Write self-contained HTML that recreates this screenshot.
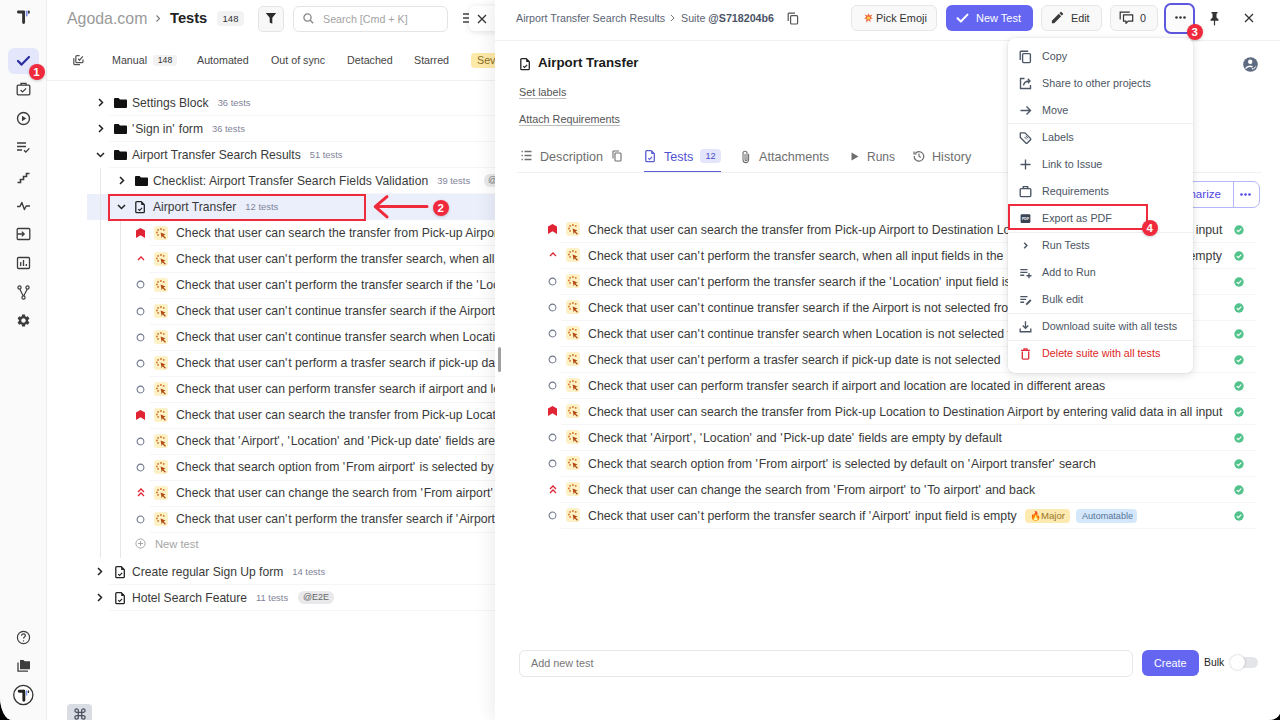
<!DOCTYPE html><html><head><meta charset="utf-8"><style>
*{box-sizing:border-box;margin:0;padding:0}
html,body{width:1280px;height:720px;overflow:hidden;background:#000;font-family:"Liberation Sans", sans-serif}
#app{position:absolute;left:0;top:0;width:1280px;height:720px;background:#fff;border-bottom-left-radius:12px 24px;border-bottom-right-radius:12px 8px;overflow:hidden}
.abs{position:absolute}
.t{position:absolute;white-space:nowrap}
svg{position:absolute;overflow:visible}
.sep{position:absolute;height:1px;background:#f5f5f7}
.badge-red{position:absolute;width:16px;height:16px;border-radius:50%;background:#f0293d;color:#fff;font-weight:700;font-size:11.5px;line-height:16px;text-align:center;box-shadow:0 1px 3px rgba(0,0,0,.2)}
.emo{position:absolute;width:14px;height:14px;border-radius:3px;background:#fdf1c7}
</style></head><body><div id="app">
<div class="abs" style="left:0;top:0;width:47px;height:720px;background:#fafafa;border-right:1px solid #ededed"></div>
<svg style="left:0;top:0" width="40" height="30" viewBox="0 0 40 30"><path d="M18.4 12h5.4M23.6 12v10.5" stroke="#333" stroke-width="2.9" stroke-linecap="round"/><path d="M26.75 11.2v4.6" stroke="#7b8cf7" stroke-width="1.6" stroke-linecap="round"/><path d="M28.85 11.4v1.4" stroke="#333" stroke-width="1.8" stroke-linecap="round"/></svg>
<div class="abs" style="left:8px;top:48px;width:31px;height:26px;border-radius:6px;background:#e4e7fb"></div>
<svg style="left:16px;top:54px" width="15" height="13" viewBox="0 0 15 13"><path d="M2 7l3.6 3.6L13 3" stroke="#2b2fa0" stroke-width="2.2" fill="none" stroke-linecap="round" stroke-linejoin="round"/></svg>
<svg style="left:16px;top:82px" width="15" height="14" viewBox="0 0 15 14"><rect x="1.2" y="3.2" width="12.6" height="9.6" rx="1" stroke="#3d3d3d" stroke-width="1.3" fill="none"/><path d="M5 3.2V1.3h5v1.9" stroke="#3d3d3d" stroke-width="1.3" fill="none"/><path d="M4.6 8l1.9 1.9 3.6-3.6" stroke="#3d3d3d" stroke-width="1.2" fill="none"/></svg>
<svg style="left:16px;top:111px" width="15" height="15" viewBox="0 0 15 15"><circle cx="7.5" cy="7.5" r="6" stroke="#3d3d3d" stroke-width="1.4" fill="none"/><path d="M6 4.7v5.6l4.3-2.8z" fill="#3d3d3d"/></svg>
<svg style="left:16px;top:141px" width="15" height="13" viewBox="0 0 15 13"><path d="M1 2h9M1 5.5h9M1 9h5" stroke="#3d3d3d" stroke-width="1.3"/><path d="M8 9.2l1.8 1.8 3.6-3.6" stroke="#3d3d3d" stroke-width="1.3" fill="none"/></svg>
<svg style="left:16px;top:170px" width="15" height="14" viewBox="0 0 15 14"><path d="M1.5 12.5h3v-3h3v-3h3v-3h3" stroke="#3d3d3d" stroke-width="1.6" fill="none"/></svg>
<svg style="left:16px;top:199px" width="15" height="14" viewBox="0 0 15 14"><path d="M1 7.5h3l1.8-4 2.6 7 1.8-3.5H14" stroke="#3d3d3d" stroke-width="1.4" fill="none" stroke-linejoin="round"/></svg>
<svg style="left:16px;top:227px" width="15" height="14" viewBox="0 0 15 14"><rect x="1.2" y="1.5" width="12.6" height="11" rx="1" stroke="#3d3d3d" stroke-width="1.3" fill="none"/><path d="M1.5 7h6.5M5.8 4.6L8.2 7l-2.4 2.4" stroke="#3d3d3d" stroke-width="1.3" fill="none"/></svg>
<svg style="left:16px;top:256px" width="15" height="14" viewBox="0 0 15 14"><rect x="1.5" y="1.5" width="12" height="11" rx="1" stroke="#3d3d3d" stroke-width="1.3" fill="none"/><path d="M4.7 10V6M7.5 10V4M10.3 10V8" stroke="#3d3d3d" stroke-width="1.3"/></svg>
<svg style="left:16px;top:285px" width="15" height="15" viewBox="0 0 15 15"><circle cx="3.5" cy="2.5" r="1.6" stroke="#3d3d3d" stroke-width="1.2" fill="none"/><circle cx="11.5" cy="2.5" r="1.6" stroke="#3d3d3d" stroke-width="1.2" fill="none"/><circle cx="7.5" cy="12.5" r="1.6" stroke="#3d3d3d" stroke-width="1.2" fill="none"/><path d="M3.8 4.2l3.4 6.6M11.2 4.2l-3.4 6.6" stroke="#3d3d3d" stroke-width="1.2"/></svg>
<svg style="left:16px;top:313px" width="15" height="15" viewBox="0 0 24 24"><path fill="#3d3d3d" d="M19.14 12.94c.04-.3.06-.61.06-.94 0-.32-.02-.64-.07-.94l2.03-1.58a.49.49 0 00.12-.61l-1.92-3.32a.488.488 0 00-.59-.22l-2.39.96c-.5-.38-1.03-.7-1.62-.94l-.36-2.54a.484.484 0 00-.48-.41h-3.84c-.24 0-.43.17-.47.41l-.36 2.54c-.59.24-1.13.57-1.62.94l-2.39-.96c-.22-.08-.47 0-.59.22L2.74 8.87c-.12.21-.08.47.12.61l2.03 1.58c-.05.3-.09.63-.09.94s.02.64.07.94l-2.03 1.58a.49.49 0 00-.12.61l1.92 3.32c.12.22.37.29.59.22l2.39-.96c.5.38 1.03.7 1.62.94l.36 2.54c.05.24.24.41.48.41h3.84c.24 0 .44-.17.47-.41l.36-2.54c.59-.24 1.13-.56 1.62-.94l2.39.96c.22.08.47 0 .59-.22l1.92-3.32c.12-.22.07-.47-.12-.61l-2.01-1.58zM12 15.6c-1.98 0-3.6-1.62-3.6-3.6s1.62-3.6 3.6-3.6 3.6 1.62 3.6 3.6-1.62 3.6-3.6 3.6z"/></svg>
<svg style="left:16px;top:630px" width="15" height="15" viewBox="0 0 15 15"><circle cx="7.5" cy="7.5" r="6.1" stroke="#3d3d3d" stroke-width="1.2" fill="none"/><path d="M5.6 5.8c0-1.2.9-1.9 1.9-1.9s1.9.7 1.9 1.7c0 1.4-1.9 1.5-1.9 3" stroke="#3d3d3d" stroke-width="1.2" fill="none"/><circle cx="7.5" cy="10.9" r=".7" fill="#3d3d3d"/></svg>
<svg style="left:16px;top:659px" width="15" height="14" viewBox="0 0 15 14"><path d="M4 1h3.5l1.2 1.3H14v8H4z" fill="#3d3d3d"/><path d="M2 3.5v8.7h10" stroke="#3d3d3d" stroke-width="1.3" fill="none"/></svg>
<svg style="left:0;top:680px" width="40" height="40" viewBox="0 0 40 40"><circle cx="23.3" cy="15" r="9.6" stroke="#333" stroke-width="1.3" fill="#fff"/><path d="M19.2 11.25h4.6M23.85 11.25v9" stroke="#222" stroke-width="2.9" stroke-linecap="round"/><path d="M26.65 10.8v4.2" stroke="#7b9cf7" stroke-width="1.3" stroke-linecap="round"/><path d="M28.45 10.9v1.5" stroke="#333" stroke-width="1.3" stroke-linecap="round"/></svg>
<div class="badge-red" style="left:28.5px;top:63.7px">1</div>
<div class="t" style="left:67px;top:10px;font-size:15.9px;line-height:18px;color:#9a9a9a">Agoda.com</div>
<svg style="left:155px;top:14px" width="6" height="9" viewBox="0 0 6 9"><path d="M1.5 1.5l3 3-3 3" stroke="#777" stroke-width="1.1" fill="none"/></svg>
<div class="t" style="left:170px;top:9px;font-size:14.7px;line-height:18px;font-weight:700;color:#222">Tests</div>
<div class="t" style="left:217px;top:11px;width:27px;height:15px;border-radius:4px;background:#f2f2f2;font-size:9.5px;line-height:15px;text-align:center;color:#333">148</div>
<div class="abs" style="left:258px;top:6px;width:26px;height:26px;border-radius:5px;border:1px solid #e4e4e4;background:#f8f8f8"></div>
<svg style="left:265px;top:12px" width="12" height="13" viewBox="0 0 12 13"><path d="M.8 1h10.4L7.3 5.8v6L4.7 10.4V5.8z" fill="#2a2a2a"/></svg>
<div class="abs" style="left:293px;top:6px;width:155px;height:26px;border-radius:6px;border:1px solid #e4e4e4;background:#fff"></div>
<svg style="left:303px;top:13px" width="11" height="11" viewBox="0 0 11 11"><circle cx="4.5" cy="4.5" r="3.6" stroke="#888" stroke-width="1.3" fill="none"/><path d="M7.2 7.2l3 3" stroke="#888" stroke-width="1.4"/></svg>
<div class="t" style="left:323px;top:12px;font-size:10.7px;line-height:14px;color:#a3a3a3">Search [Cmd + K]</div>
<svg style="left:463px;top:13px" width="6" height="10" viewBox="0 0 6 10"><path d="M0 1h6M0 5h6M0 9h6" stroke="#444" stroke-width="1.3"/></svg>
<div class="abs" style="left:469px;top:6px;width:40px;height:25px;border-radius:6px;background:#fff;box-shadow:0 1px 6px rgba(0,0,0,.12)"></div>
<svg style="left:477px;top:14px" width="10" height="10" viewBox="0 0 10 10"><path d="M1 1l8 8M9 1l-8 8" stroke="#333" stroke-width="1.3"/></svg>
<svg style="left:68px;top:50px" width="22" height="20" viewBox="0 0 22 20"><path d="M11.6 5.6H9a1.2 1.2 0 0 0-1.2 1.2v4.6A1.2 1.2 0 0 0 9 12.6h4.8a1.2 1.2 0 0 0 1.2-1.2V9.4" stroke="#555" stroke-width="1.25" fill="none"/><path d="M5.8 8.2v5.2a1.2 1.2 0 0 0 1.2 1.2h5" stroke="#555" stroke-width="1.25" fill="none"/><path d="M10.2 8.8l1.3 1.4 3.3-3.8" stroke="#555" stroke-width="1.25" fill="none"/></svg>
<div class="t" style="left:112px;top:53px;font-size:10.7px;line-height:14px;color:#444">Manual</div>
<div class="t" style="left:153px;top:55px;width:24px;height:11px;border-radius:3px;background:#f2f2f2;font-size:8.6px;line-height:11px;text-align:center;color:#333">148</div>
<div class="t" style="left:197px;top:53px;font-size:10.7px;line-height:14px;color:#444">Automated</div>
<div class="t" style="left:271px;top:53px;font-size:10.7px;line-height:14px;color:#444">Out of sync</div>
<div class="t" style="left:347px;top:53px;font-size:10.7px;line-height:14px;color:#444">Detached</div>
<div class="t" style="left:414px;top:53px;font-size:10.7px;line-height:14px;color:#444">Starred</div>
<div class="abs" style="left:471px;top:53px;width:60px;height:15px;border-radius:4px;background:#fde9a8"></div>
<div class="t" style="left:477px;top:53px;font-size:10.7px;line-height:14px;color:#8a6d1f">Severity</div>
<div class="sep" style="left:47px;top:80px;width:448px;background:#f1f1f1"></div>
<div class="abs" style="left:87px;top:194px;width:408px;height:26px;background:#ebeffb"></div>
<svg style="left:98px;top:98.1px" width="6" height="9" viewBox="0 0 6 9"><path d="M1 1l3.5 3.5L1 8" stroke="#222" stroke-width="1.5" fill="none"/></svg>
<svg style="left:114px;top:97.6px" width="13" height="10" viewBox="0 0 13 10"><path d="M0 1a1 1 0 011-1h3.6l1.4 1.4H12a1 1 0 011 1V9a1 1 0 01-1 1H1a1 1 0 01-1-1z" fill="#111"/></svg>
<div class="t" style="left:132px;top:89.60px;font-size:12.1px;line-height:26px;color:#3a3a3a"><span style="letter-spacing:0px">Settings Block</span><span style="font-size:9.4px;color:#7f8499;margin-left:9px;vertical-align:1px">36 tests</span></div>
<div class="sep" style="left:109px;top:115.20px;width:386px"></div>
<svg style="left:98px;top:124.15px" width="6" height="9" viewBox="0 0 6 9"><path d="M1 1l3.5 3.5L1 8" stroke="#222" stroke-width="1.5" fill="none"/></svg>
<svg style="left:114px;top:123.65px" width="13" height="10" viewBox="0 0 13 10"><path d="M0 1a1 1 0 011-1h3.6l1.4 1.4H12a1 1 0 011 1V9a1 1 0 01-1 1H1a1 1 0 01-1-1z" fill="#111"/></svg>
<div class="t" style="left:132px;top:115.65px;font-size:12.1px;line-height:26px;color:#3a3a3a"><span style="letter-spacing:0px"><span style="letter-spacing:0.9px">'</span>Sign in<span style="letter-spacing:0.9px">'</span> form</span><span style="font-size:9.4px;color:#7f8499;margin-left:9px;vertical-align:1px">36 tests</span></div>
<div class="sep" style="left:109px;top:141.25px;width:386px"></div>
<svg style="left:96px;top:152.2px" width="9" height="6" viewBox="0 0 9 6"><path d="M1 1l3.5 3.5L8 1" stroke="#222" stroke-width="1.5" fill="none"/></svg>
<svg style="left:114px;top:149.7px" width="13" height="10" viewBox="0 0 13 10"><path d="M0 1a1 1 0 011-1h3.6l1.4 1.4H12a1 1 0 011 1V9a1 1 0 01-1 1H1a1 1 0 01-1-1z" fill="#111"/></svg>
<div class="t" style="left:132px;top:141.70px;font-size:12.1px;line-height:26px;color:#3a3a3a"><span style="letter-spacing:0px">Airport Transfer Search Results</span><span style="font-size:9.4px;color:#7f8499;margin-left:9px;vertical-align:1px">51 tests</span></div>
<div class="sep" style="left:109px;top:167.30px;width:386px"></div>
<svg style="left:119px;top:176.25px" width="6" height="9" viewBox="0 0 6 9"><path d="M1 1l3.5 3.5L1 8" stroke="#222" stroke-width="1.5" fill="none"/></svg>
<svg style="left:135px;top:175.75px" width="13" height="10" viewBox="0 0 13 10"><path d="M0 1a1 1 0 011-1h3.6l1.4 1.4H12a1 1 0 011 1V9a1 1 0 01-1 1H1a1 1 0 01-1-1z" fill="#111"/></svg>
<div class="t" style="left:153px;top:167.75px;font-size:12.1px;line-height:26px;color:#3a3a3a"><span style="letter-spacing:0.075px">Checklist: Airport Transfer Search Fields Validation</span><span style="font-size:9.4px;color:#7f8499;margin-left:9px;vertical-align:1px">39 tests</span></div>
<div class="sep" style="left:109px;top:193.35px;width:386px"></div>
<div class="t" style="left:484px;top:174.25px;width:30px;height:13px;border-radius:6px;background:#e9e9ec;font-size:9px;line-height:13px;color:#777;padding-left:4px">@E2E</div>
<svg style="left:117px;top:204.3px" width="9" height="6" viewBox="0 0 9 6"><path d="M1 1l3.5 3.5L8 1" stroke="#222" stroke-width="1.5" fill="none"/></svg>
<svg style="left:135px;top:200.8px" width="11.0" height="12.0" viewBox="0 0 11 12"><path d="M1.7.7h4.6l3 3v7a.9.9 0 01-.9.9H1.7a.9.9 0 01-.9-.9V1.6a.9.9 0 01.9-.9z" stroke="#222" stroke-width="1.3" fill="none" stroke-linejoin="round"/><path d="M6.2.7L9.4 3.9H6.2z" fill="#222"/><path d="M3.2 8.1l1.4 1.3 2.5-2.5" stroke="#222" stroke-width="1.15" fill="none"/></svg>
<div class="t" style="left:153px;top:193.80px;font-size:12.1px;line-height:26px;color:#3a3a3a"><span style="letter-spacing:0px">Airport Transfer</span><span style="font-size:9.4px;color:#7f8499;margin-left:9px;vertical-align:1px">12 tests</span></div>
<svg style="left:136.10px;top:227.85px" width="9" height="10" viewBox="0 0 9 10"><path d="M0 2.6L4.5 0 9 2.6V10L4.5 7.2 0 10z" fill="#e02434"/></svg>
<div class="emo" style="left:154.20px;top:225.75px"></div>
<svg style="left:154.20px;top:225.75px" width="14" height="14" viewBox="0 0 14 14"><g fill="#d47a2e"><circle cx="6.9" cy="3" r=".95"/><circle cx="4.1" cy="3.9" r=".95"/><circle cx="9.7" cy="3.9" r=".95"/><circle cx="2.9" cy="6.5" r=".95"/><circle cx="4.1" cy="8.9" r=".95"/></g><path d="M6.6 6.6l4.9 1.9-2 .9 2.4 2.4-.9.9-2.4-2.4-.9 2z" fill="#b04a12"/></svg>
<div class="t" style="left:176px;top:219.85px;font-size:12.25px;line-height:26px;color:#3a3a3a"><span style="letter-spacing:0px">Check that user can search the transfer from Pick-up Airport to Destination Location by entering valid data in all input</span></div>
<div class="sep" style="left:150px;top:245.45px;width:345px"></div>
<svg style="left:136.60px;top:255.90px" width="8" height="5" viewBox="0 0 8 5"><path d="M1 4l3-3 3 3" stroke="#e02434" stroke-width="1.3" fill="none"/></svg>
<div class="emo" style="left:154.20px;top:251.80px"></div>
<svg style="left:154.20px;top:251.80px" width="14" height="14" viewBox="0 0 14 14"><g fill="#d47a2e"><circle cx="6.9" cy="3" r=".95"/><circle cx="4.1" cy="3.9" r=".95"/><circle cx="9.7" cy="3.9" r=".95"/><circle cx="2.9" cy="6.5" r=".95"/><circle cx="4.1" cy="8.9" r=".95"/></g><path d="M6.6 6.6l4.9 1.9-2 .9 2.4 2.4-.9.9-2.4-2.4-.9 2z" fill="#b04a12"/></svg>
<div class="t" style="left:176px;top:245.90px;font-size:12.25px;line-height:26px;color:#3a3a3a"><span style="letter-spacing:0px">Check that user can<span style="letter-spacing:0.9px">'</span>t perform the transfer search, when all input fields in the form are empty</span></div>
<div class="sep" style="left:150px;top:271.50px;width:345px"></div>
<svg style="left:136.10px;top:280.45px" width="9" height="9" viewBox="0 0 9 9"><circle cx="4.5" cy="4.5" r="3.4" stroke="#6b7489" stroke-width="1.05" fill="none"/></svg>
<div class="emo" style="left:154.20px;top:277.85px"></div>
<svg style="left:154.20px;top:277.85px" width="14" height="14" viewBox="0 0 14 14"><g fill="#d47a2e"><circle cx="6.9" cy="3" r=".95"/><circle cx="4.1" cy="3.9" r=".95"/><circle cx="9.7" cy="3.9" r=".95"/><circle cx="2.9" cy="6.5" r=".95"/><circle cx="4.1" cy="8.9" r=".95"/></g><path d="M6.6 6.6l4.9 1.9-2 .9 2.4 2.4-.9.9-2.4-2.4-.9 2z" fill="#b04a12"/></svg>
<div class="t" style="left:176px;top:271.95px;font-size:12.25px;line-height:26px;color:#3a3a3a"><span style="letter-spacing:0px">Check that user can<span style="letter-spacing:0.9px">'</span>t perform the transfer search if the <span style="letter-spacing:0.9px">'</span>Location<span style="letter-spacing:0.9px">'</span> input field is empty</span></div>
<div class="sep" style="left:150px;top:297.55px;width:345px"></div>
<svg style="left:136.10px;top:306.50px" width="9" height="9" viewBox="0 0 9 9"><circle cx="4.5" cy="4.5" r="3.4" stroke="#6b7489" stroke-width="1.05" fill="none"/></svg>
<div class="emo" style="left:154.20px;top:303.90px"></div>
<svg style="left:154.20px;top:303.90px" width="14" height="14" viewBox="0 0 14 14"><g fill="#d47a2e"><circle cx="6.9" cy="3" r=".95"/><circle cx="4.1" cy="3.9" r=".95"/><circle cx="9.7" cy="3.9" r=".95"/><circle cx="2.9" cy="6.5" r=".95"/><circle cx="4.1" cy="8.9" r=".95"/></g><path d="M6.6 6.6l4.9 1.9-2 .9 2.4 2.4-.9.9-2.4-2.4-.9 2z" fill="#b04a12"/></svg>
<div class="t" style="left:176px;top:298.00px;font-size:12.25px;line-height:26px;color:#3a3a3a"><span style="letter-spacing:0px">Check that user can<span style="letter-spacing:0.9px">'</span>t continue transfer search if the Airport is not selected from the dropdown</span></div>
<div class="sep" style="left:150px;top:323.60px;width:345px"></div>
<svg style="left:136.10px;top:332.55px" width="9" height="9" viewBox="0 0 9 9"><circle cx="4.5" cy="4.5" r="3.4" stroke="#6b7489" stroke-width="1.05" fill="none"/></svg>
<div class="emo" style="left:154.20px;top:329.95px"></div>
<svg style="left:154.20px;top:329.95px" width="14" height="14" viewBox="0 0 14 14"><g fill="#d47a2e"><circle cx="6.9" cy="3" r=".95"/><circle cx="4.1" cy="3.9" r=".95"/><circle cx="9.7" cy="3.9" r=".95"/><circle cx="2.9" cy="6.5" r=".95"/><circle cx="4.1" cy="8.9" r=".95"/></g><path d="M6.6 6.6l4.9 1.9-2 .9 2.4 2.4-.9.9-2.4-2.4-.9 2z" fill="#b04a12"/></svg>
<div class="t" style="left:176px;top:324.05px;font-size:12.25px;line-height:26px;color:#3a3a3a"><span style="letter-spacing:0px">Check that user can<span style="letter-spacing:0.9px">'</span>t continue transfer search when Location is not selected from the dropdown</span></div>
<div class="sep" style="left:150px;top:349.65px;width:345px"></div>
<svg style="left:136.10px;top:358.60px" width="9" height="9" viewBox="0 0 9 9"><circle cx="4.5" cy="4.5" r="3.4" stroke="#6b7489" stroke-width="1.05" fill="none"/></svg>
<div class="emo" style="left:154.20px;top:356.00px"></div>
<svg style="left:154.20px;top:356.00px" width="14" height="14" viewBox="0 0 14 14"><g fill="#d47a2e"><circle cx="6.9" cy="3" r=".95"/><circle cx="4.1" cy="3.9" r=".95"/><circle cx="9.7" cy="3.9" r=".95"/><circle cx="2.9" cy="6.5" r=".95"/><circle cx="4.1" cy="8.9" r=".95"/></g><path d="M6.6 6.6l4.9 1.9-2 .9 2.4 2.4-.9.9-2.4-2.4-.9 2z" fill="#b04a12"/></svg>
<div class="t" style="left:176px;top:350.10px;font-size:12.25px;line-height:26px;color:#3a3a3a"><span style="letter-spacing:0px">Check that user can<span style="letter-spacing:0.9px">'</span>t perform a trasfer search if pick-up date is not selected</span></div>
<div class="sep" style="left:150px;top:375.70px;width:345px"></div>
<svg style="left:136.10px;top:384.65px" width="9" height="9" viewBox="0 0 9 9"><circle cx="4.5" cy="4.5" r="3.4" stroke="#6b7489" stroke-width="1.05" fill="none"/></svg>
<div class="emo" style="left:154.20px;top:382.05px"></div>
<svg style="left:154.20px;top:382.05px" width="14" height="14" viewBox="0 0 14 14"><g fill="#d47a2e"><circle cx="6.9" cy="3" r=".95"/><circle cx="4.1" cy="3.9" r=".95"/><circle cx="9.7" cy="3.9" r=".95"/><circle cx="2.9" cy="6.5" r=".95"/><circle cx="4.1" cy="8.9" r=".95"/></g><path d="M6.6 6.6l4.9 1.9-2 .9 2.4 2.4-.9.9-2.4-2.4-.9 2z" fill="#b04a12"/></svg>
<div class="t" style="left:176px;top:376.15px;font-size:12.25px;line-height:26px;color:#3a3a3a"><span style="letter-spacing:0px">Check that user can perform transfer search if airport and location are located in different areas</span></div>
<div class="sep" style="left:150px;top:401.75px;width:345px"></div>
<svg style="left:136.10px;top:410.20px" width="9" height="10" viewBox="0 0 9 10"><path d="M0 2.6L4.5 0 9 2.6V10L4.5 7.2 0 10z" fill="#e02434"/></svg>
<div class="emo" style="left:154.20px;top:408.10px"></div>
<svg style="left:154.20px;top:408.10px" width="14" height="14" viewBox="0 0 14 14"><g fill="#d47a2e"><circle cx="6.9" cy="3" r=".95"/><circle cx="4.1" cy="3.9" r=".95"/><circle cx="9.7" cy="3.9" r=".95"/><circle cx="2.9" cy="6.5" r=".95"/><circle cx="4.1" cy="8.9" r=".95"/></g><path d="M6.6 6.6l4.9 1.9-2 .9 2.4 2.4-.9.9-2.4-2.4-.9 2z" fill="#b04a12"/></svg>
<div class="t" style="left:176px;top:402.20px;font-size:12.25px;line-height:26px;color:#3a3a3a"><span style="letter-spacing:0px">Check that user can search the transfer from Pick-up Location to Destination Airport by entering valid data in all input</span></div>
<div class="sep" style="left:150px;top:427.80px;width:345px"></div>
<svg style="left:136.10px;top:436.75px" width="9" height="9" viewBox="0 0 9 9"><circle cx="4.5" cy="4.5" r="3.4" stroke="#6b7489" stroke-width="1.05" fill="none"/></svg>
<div class="emo" style="left:154.20px;top:434.15px"></div>
<svg style="left:154.20px;top:434.15px" width="14" height="14" viewBox="0 0 14 14"><g fill="#d47a2e"><circle cx="6.9" cy="3" r=".95"/><circle cx="4.1" cy="3.9" r=".95"/><circle cx="9.7" cy="3.9" r=".95"/><circle cx="2.9" cy="6.5" r=".95"/><circle cx="4.1" cy="8.9" r=".95"/></g><path d="M6.6 6.6l4.9 1.9-2 .9 2.4 2.4-.9.9-2.4-2.4-.9 2z" fill="#b04a12"/></svg>
<div class="t" style="left:176px;top:428.25px;font-size:12.25px;line-height:26px;color:#3a3a3a"><span style="letter-spacing:0px">Check that <span style="letter-spacing:0.9px">'</span>Airport<span style="letter-spacing:0.9px">'</span>, <span style="letter-spacing:0.9px">'</span>Location<span style="letter-spacing:0.9px">'</span> and <span style="letter-spacing:0.9px">'</span>Pick-up date<span style="letter-spacing:0.9px">'</span> fields are empty by default</span></div>
<div class="sep" style="left:150px;top:453.85px;width:345px"></div>
<svg style="left:136.10px;top:462.80px" width="9" height="9" viewBox="0 0 9 9"><circle cx="4.5" cy="4.5" r="3.4" stroke="#6b7489" stroke-width="1.05" fill="none"/></svg>
<div class="emo" style="left:154.20px;top:460.20px"></div>
<svg style="left:154.20px;top:460.20px" width="14" height="14" viewBox="0 0 14 14"><g fill="#d47a2e"><circle cx="6.9" cy="3" r=".95"/><circle cx="4.1" cy="3.9" r=".95"/><circle cx="9.7" cy="3.9" r=".95"/><circle cx="2.9" cy="6.5" r=".95"/><circle cx="4.1" cy="8.9" r=".95"/></g><path d="M6.6 6.6l4.9 1.9-2 .9 2.4 2.4-.9.9-2.4-2.4-.9 2z" fill="#b04a12"/></svg>
<div class="t" style="left:176px;top:454.30px;font-size:12.25px;line-height:26px;color:#3a3a3a"><span style="letter-spacing:0px">Check that search option from <span style="letter-spacing:0.9px">'</span>From airport<span style="letter-spacing:0.9px">'</span> is selected by default on <span style="letter-spacing:0.9px">'</span>Airport transfer<span style="letter-spacing:0.9px">'</span> search</span></div>
<div class="sep" style="left:150px;top:479.90px;width:345px"></div>
<svg style="left:136.60px;top:488.35px" width="8" height="9" viewBox="0 0 8 9"><path d="M1 4l3-3 3 3M1 8l3-3 3 3" stroke="#e02434" stroke-width="1.3" fill="none"/></svg>
<div class="emo" style="left:154.20px;top:486.25px"></div>
<svg style="left:154.20px;top:486.25px" width="14" height="14" viewBox="0 0 14 14"><g fill="#d47a2e"><circle cx="6.9" cy="3" r=".95"/><circle cx="4.1" cy="3.9" r=".95"/><circle cx="9.7" cy="3.9" r=".95"/><circle cx="2.9" cy="6.5" r=".95"/><circle cx="4.1" cy="8.9" r=".95"/></g><path d="M6.6 6.6l4.9 1.9-2 .9 2.4 2.4-.9.9-2.4-2.4-.9 2z" fill="#b04a12"/></svg>
<div class="t" style="left:176px;top:480.35px;font-size:12.25px;line-height:26px;color:#3a3a3a"><span style="letter-spacing:0px">Check that user can change the search from <span style="letter-spacing:0.9px">'</span>From airport<span style="letter-spacing:0.9px">'</span> to <span style="letter-spacing:0.9px">'</span>To airport<span style="letter-spacing:0.9px">'</span> and back</span></div>
<div class="sep" style="left:150px;top:505.95px;width:345px"></div>
<svg style="left:136.10px;top:514.90px" width="9" height="9" viewBox="0 0 9 9"><circle cx="4.5" cy="4.5" r="3.4" stroke="#6b7489" stroke-width="1.05" fill="none"/></svg>
<div class="emo" style="left:154.20px;top:512.30px"></div>
<svg style="left:154.20px;top:512.30px" width="14" height="14" viewBox="0 0 14 14"><g fill="#d47a2e"><circle cx="6.9" cy="3" r=".95"/><circle cx="4.1" cy="3.9" r=".95"/><circle cx="9.7" cy="3.9" r=".95"/><circle cx="2.9" cy="6.5" r=".95"/><circle cx="4.1" cy="8.9" r=".95"/></g><path d="M6.6 6.6l4.9 1.9-2 .9 2.4 2.4-.9.9-2.4-2.4-.9 2z" fill="#b04a12"/></svg>
<div class="t" style="left:176px;top:506.40px;font-size:12.25px;line-height:26px;color:#3a3a3a"><span style="letter-spacing:0px">Check that user can<span style="letter-spacing:0.9px">'</span>t perform the transfer search if <span style="letter-spacing:0.9px">'</span>Airport<span style="letter-spacing:0.9px">'</span> input field is empty</span></div>
<div class="sep" style="left:150px;top:532.00px;width:345px"></div>
<svg style="left:135px;top:538.35px" width="11" height="11" viewBox="0 0 11 11"><circle cx="5.5" cy="5.5" r="4.6" stroke="#a6a6a6" stroke-width="1" fill="none"/><path d="M5.5 3v5M3 5.5h5" stroke="#a6a6a6" stroke-width="1"/></svg>
<div class="t" style="left:155px;top:530.85px;font-size:11.2px;line-height:26px;color:#a6a6a6">New test</div>
<div class="abs" style="left:100px;top:168px;width:1px;height:390px;background:#e6e6e6"></div>
<div class="abs" style="left:120px;top:221px;width:1px;height:337px;background:#e6e6e6"></div>
<svg style="left:97.3px;top:567.0px" width="6" height="9" viewBox="0 0 6 9"><path d="M1 1l3.5 3.5L1 8" stroke="#222" stroke-width="1.5" fill="none"/></svg>
<svg style="left:115.3px;top:565.5px" width="11.0" height="12.0" viewBox="0 0 11 12"><path d="M1.7.7h4.6l3 3v7a.9.9 0 01-.9.9H1.7a.9.9 0 01-.9-.9V1.6a.9.9 0 01.9-.9z" stroke="#222" stroke-width="1.3" fill="none" stroke-linejoin="round"/><path d="M6.2.7L9.4 3.9H6.2z" fill="#222"/><path d="M3.2 8.1l1.4 1.3 2.5-2.5" stroke="#222" stroke-width="1.15" fill="none"/></svg>
<div class="t" style="left:132px;top:558.50px;font-size:12.1px;line-height:26px;color:#3a3a3a"><span style="letter-spacing:0px">Create regular Sign Up form</span><span style="font-size:9.4px;color:#7f8499;margin-left:9px;vertical-align:1px">14 tests</span></div>
<div class="sep" style="left:109px;top:584.10px;width:386px"></div>
<svg style="left:97.3px;top:593.05px" width="6" height="9" viewBox="0 0 6 9"><path d="M1 1l3.5 3.5L1 8" stroke="#222" stroke-width="1.5" fill="none"/></svg>
<svg style="left:115.3px;top:591.55px" width="11.0" height="12.0" viewBox="0 0 11 12"><path d="M1.7.7h4.6l3 3v7a.9.9 0 01-.9.9H1.7a.9.9 0 01-.9-.9V1.6a.9.9 0 01.9-.9z" stroke="#222" stroke-width="1.3" fill="none" stroke-linejoin="round"/><path d="M6.2.7L9.4 3.9H6.2z" fill="#222"/><path d="M3.2 8.1l1.4 1.3 2.5-2.5" stroke="#222" stroke-width="1.15" fill="none"/></svg>
<div class="t" style="left:132px;top:584.55px;font-size:12.1px;line-height:26px;color:#3a3a3a"><span style="letter-spacing:0px">Hotel Search Feature</span><span style="font-size:9.4px;color:#7f8499;margin-left:9px;vertical-align:1px">11 tests</span></div>
<div class="sep" style="left:109px;top:610.15px;width:386px"></div>
<div class="t" style="left:298px;top:591.35px;width:36px;height:13px;border-radius:6px;background:#e9e9ec;font-size:9px;line-height:13px;color:#666;text-align:center">@E2E</div>
<div class="abs" style="left:108px;top:194px;width:258px;height:27px;border:2px solid #ef2a3d"></div>
<svg style="left:370px;top:192px" width="62" height="30" viewBox="0 0 62 30"><path d="M57 14.6H6M17 4.7L5.2 14.6 17 24.9" stroke="#ee2a3b" stroke-width="3" fill="none" stroke-linecap="round" stroke-linejoin="round"/></svg>
<div class="badge-red" style="left:432.8px;top:200px">2</div>
<div class="abs" style="left:495px;top:0;width:785px;height:720px;background:#fff;box-shadow:-6px 0 14px rgba(0,0,0,.06)"></div>
<div class="t" style="left:516px;top:11px;font-size:10.7px;line-height:14px;color:#5b6475">Airport Transfer Search Results</div>
<svg style="left:670px;top:14px" width="5" height="8" viewBox="0 0 5 8"><path d="M1 1l3 3-3 3" stroke="#777" stroke-width="1" fill="none"/></svg>
<div class="t" style="left:681px;top:11px;font-size:10.7px;line-height:14px;color:#5b6475">Suite <b style="color:#4a5366">@S718204b6</b></div>
<svg style="left:787px;top:12px" width="12" height="13" viewBox="0 0 12 13"><rect x="3.6" y="3.6" width="7" height="8.4" rx="1" stroke="#555" stroke-width="1.2" fill="none"/><path d="M1.2 9V1.8a.6.6 0 01.6-.6H8" stroke="#555" stroke-width="1.2" fill="none"/></svg>
<div class="abs" style="left:851px;top:5px;width:86px;height:26px;border-radius:6px;border:1px solid #e6e6e6;background:#f9f9f9"></div>
<svg style="left:864px;top:13px" width="9" height="10" viewBox="0 0 9 10"><path d="M4.5 0l1 2.6L8.4 1.6 6.8 4.2 9 5.6 6.2 6 6.6 9.2 4.5 7.2 2.2 9.4 2.4 6 0 5.4 2.2 4 .8 1.4 3.6 2.6z" fill="#f36b3b"/><circle cx="4.5" cy="5" r="1.6" fill="#fbd34d"/></svg>
<div class="t" style="left:876px;top:11px;font-size:10.9px;line-height:14px;color:#333">Pick Emoji</div>
<div class="abs" style="left:946px;top:5px;width:87px;height:26px;border-radius:6px;background:#6466f1"></div>
<svg style="left:956px;top:13px" width="13" height="10" viewBox="0 0 13 10"><path d="M1.5 5.2l3.4 3.3L11.5 1.6" stroke="#fff" stroke-width="2" fill="none" stroke-linecap="round" stroke-linejoin="round"/></svg>
<div class="t" style="left:976px;top:11px;font-size:11px;line-height:14px;color:#fff">New Test</div>
<div class="abs" style="left:1041px;top:5px;width:61px;height:26px;border-radius:6px;border:1px solid #e6e6e6;background:#f9f9f9"></div>
<svg style="left:1050px;top:10px" width="15" height="15" viewBox="0 0 24 24"><path fill="#3a3a3a" d="M3 17.25V21h3.75L17.81 9.94l-3.75-3.75L3 17.25zM20.71 7.04a.996.996 0 0 0 0-1.41l-2.34-2.34a.996.996 0 0 0-1.41 0l-1.83 1.83 3.75 3.75 1.83-1.83z"/></svg>
<div class="t" style="left:1071px;top:11px;font-size:10.8px;line-height:14px;color:#333">Edit</div>
<div class="abs" style="left:1110px;top:5px;width:48px;height:26px;border-radius:6px;border:1px solid #e6e6e6;background:#f9f9f9"></div>
<svg style="left:1119px;top:11px" width="15" height="14" viewBox="0 0 15 14"><path d="M4.5 3.8h9.2v6.4H9.2l-2.2 2.2V10.2H4.5z" stroke="#333" stroke-width="1.2" fill="none" stroke-linejoin="round"/><path d="M1.2 8.5V1.2h9.6" stroke="#333" stroke-width="1.2" fill="none"/></svg>
<div class="t" style="left:1140px;top:11px;font-size:10.8px;line-height:14px;color:#333">0</div>
<div class="abs" style="left:1164px;top:3px;width:31px;height:31px;border-radius:7px;border:2px solid #5d57e0;background:#fbfbfb"></div>
<svg style="left:1175px;top:16px" width="11" height="3" viewBox="0 0 11 3"><circle cx="1.5" cy="1.5" r="1.3" fill="#333"/><circle cx="5.5" cy="1.5" r="1.3" fill="#333"/><circle cx="9.5" cy="1.5" r="1.3" fill="#333"/></svg>
<svg style="left:1209px;top:11px" width="11" height="15" viewBox="0 0 11 15"><path d="M2.5 1h6v1.2l-1 .6v3.6l2 2.2v1.2H6.1V14L5.5 14.8 4.9 14V9.8H1.5V8.6l2-2.2V2.8l-1-.6z" fill="#333"/></svg>
<svg style="left:1244px;top:13px" width="10" height="10" viewBox="0 0 10 10"><path d="M1 1l8 8M9 1l-8 8" stroke="#333" stroke-width="1.3"/></svg>
<div class="sep" style="left:495px;top:40px;width:785px;background:#efefef"></div>
<svg style="left:519.8px;top:57.5px" width="11.0" height="12.0" viewBox="0 0 11 12"><path d="M1.7.7h4.6l3 3v7a.9.9 0 01-.9.9H1.7a.9.9 0 01-.9-.9V1.6a.9.9 0 01.9-.9z" stroke="#222" stroke-width="1.3" fill="none" stroke-linejoin="round"/><path d="M6.2.7L9.4 3.9H6.2z" fill="#222"/><path d="M3.2 8.1l1.4 1.3 2.5-2.5" stroke="#222" stroke-width="1.15" fill="none"/></svg>
<div class="t" style="left:538px;top:55px;font-size:13.3px;line-height:16px;font-weight:700;color:#1a1a1a">Airport Transfer</div>
<div class="t" style="left:519px;top:85px;font-size:10.8px;line-height:14px;color:#555;text-decoration:underline;text-decoration-color:#bdbdbd;text-decoration-thickness:1.4px;text-underline-offset:1.6px">Set labels</div>
<div class="t" style="left:519px;top:112px;font-size:10.8px;line-height:14px;color:#555;text-decoration:underline;text-decoration-color:#bdbdbd;text-decoration-thickness:1.4px;text-underline-offset:1.6px">Attach Requirements</div>
<svg style="left:1243px;top:57px" width="15" height="15" viewBox="0 0 15 15"><circle cx="7.5" cy="7.5" r="7.3" fill="#5f6b80"/><circle cx="7.2" cy="4.8" r="2.2" fill="#fff"/><path d="M2.6 11.6c.9-1.6 2.6-2.4 4.4-2.4 1 0 1.8.2 2.5.6" stroke="#fff" stroke-width="1.4" fill="none"/><path d="M8.8 11l1.4 1.3 2.8-3" stroke="#fff" stroke-width="1" fill="none"/></svg>
<svg style="left:521px;top:150px" width="11" height="11" viewBox="0 0 11 11"><path d="M.5 1.5h1.3M.5 5.5h1.3M.5 9.5h1.3M3.5 1.5H10.5M3.5 5.5H10.5M3.5 9.5H10.5" stroke="#6e6e6e" stroke-width="1.3"/></svg>
<div class="t" style="left:540px;top:150px;font-size:12.6px;line-height:15px;color:#6e6e6e">Description</div>
<svg style="left:612px;top:150px" width="10" height="12" viewBox="0 0 10 12"><rect x="3" y="3" width="6" height="8" rx=".8" stroke="#6e6e6e" stroke-width="1.1" fill="none"/><path d="M1 8.5V1.5a.5.5 0 01.5-.5H7" stroke="#6e6e6e" stroke-width="1.1" fill="none"/></svg>
<svg style="left:645px;top:150px" width="11.0" height="12.0" viewBox="0 0 11 12"><path d="M1.7.7h4.6l3 3v7a.9.9 0 01-.9.9H1.7a.9.9 0 01-.9-.9V1.6a.9.9 0 01.9-.9z" stroke="#5b5fd6" stroke-width="1.3" fill="none" stroke-linejoin="round"/><path d="M6.2.7L9.4 3.9H6.2z" fill="#5b5fd6"/><path d="M3.2 8.1l1.4 1.3 2.5-2.5" stroke="#5b5fd6" stroke-width="1.15" fill="none"/></svg>
<div class="t" style="left:664px;top:150px;font-size:12.6px;line-height:15px;color:#5053d0">Tests</div>
<div class="t" style="left:700px;top:149px;width:21px;height:14px;border-radius:4px;background:#e3e5fb;font-size:9.2px;line-height:14px;text-align:center;color:#4b4fc8">12</div>
<div class="abs" style="left:644px;top:171px;width:77px;height:2px;background:#5b5fd6"></div>
<svg style="left:741px;top:150px" width="10" height="14" viewBox="0 0 10 14"><path d="M7.6 4.2v5.6a2.8 2.8 0 0 1-5.6 0V3.2a2 2 0 0 1 4 0v6.4a1 1 0 0 1-2 0V4.4" stroke="#6e6e6e" stroke-width="1.1" fill="none" stroke-linecap="round"/></svg>
<div class="t" style="left:759px;top:150px;font-size:12.6px;line-height:15px;color:#6e6e6e">Attachments</div>
<svg style="left:851px;top:152px" width="8" height="9" viewBox="0 0 8 9"><path d="M.5.5v8l7-4z" fill="#6e6e6e"/></svg>
<div class="t" style="left:867px;top:150px;font-size:12px;line-height:15px;color:#6e6e6e">Runs</div>
<svg style="left:913px;top:150px" width="12" height="12" viewBox="0 0 12 12"><path d="M2.2 3.4A4.8 4.8 0 111.2 6" stroke="#6e6e6e" stroke-width="1.2" fill="none"/><path d="M1 1.4v2.6h2.6" stroke="#6e6e6e" stroke-width="1.2" fill="none"/><path d="M6 3.6V6.2l1.8 1.2" stroke="#6e6e6e" stroke-width="1.2" fill="none"/></svg>
<div class="t" style="left:932px;top:150px;font-size:12.6px;line-height:15px;color:#6e6e6e">History</div>
<div class="sep" style="left:517px;top:172px;width:745px;background:#f0f0f2"></div>
<div class="abs" style="left:1140px;top:181px;width:120px;height:27px;border-radius:7px;border:1px solid #b4b6f6;background:#fff"></div>
<div class="abs" style="left:1233px;top:182px;width:1px;height:25px;background:#b4b6f6"></div>
<div class="t" style="left:1121px;top:187px;width:100px;text-align:right;font-size:11.6px;line-height:14px;color:#4f46e5">Summarize</div>
<svg style="left:1240px;top:193px" width="11" height="3" viewBox="0 0 11 3"><circle cx="1.5" cy="1.5" r="1.3" fill="#4f46e5"/><circle cx="5.5" cy="1.5" r="1.3" fill="#4f46e5"/><circle cx="9.5" cy="1.5" r="1.3" fill="#4f46e5"/></svg>
<svg style="left:548.20px;top:224.20px" width="9" height="10" viewBox="0 0 9 10"><path d="M0 2.6L4.5 0 9 2.6V10L4.5 7.2 0 10z" fill="#e02434"/></svg>
<div class="emo" style="left:566.10px;top:221.70px"></div>
<svg style="left:566.10px;top:221.70px" width="14" height="14" viewBox="0 0 14 14"><g fill="#d47a2e"><circle cx="6.9" cy="3" r=".95"/><circle cx="4.1" cy="3.9" r=".95"/><circle cx="9.7" cy="3.9" r=".95"/><circle cx="2.9" cy="6.5" r=".95"/><circle cx="4.1" cy="8.9" r=".95"/></g><path d="M6.6 6.6l4.9 1.9-2 .9 2.4 2.4-.9.9-2.4-2.4-.9 2z" fill="#b04a12"/></svg>
<div class="t" style="left:588px;top:216.80px;font-size:12.3px;line-height:26px;color:#3a3a3a">Check that user can search the transfer from Pick-up Airport to Destination Location by entering valid data in all input</div>
<svg style="left:1234px;top:224.80px" width="10" height="10" viewBox="0 0 10 10"><circle cx="5" cy="5" r="4.7" fill="#52c38b"/><path d="M2.8 5.1l1.5 1.5 3-3" stroke="#fff" stroke-width="1.2" fill="none"/></svg>
<div class="sep" style="left:561px;top:241.60000000000002px;width:695px"></div>
<svg style="left:548.70px;top:252.23px" width="8" height="5" viewBox="0 0 8 5"><path d="M1 4l3-3 3 3" stroke="#e02434" stroke-width="1.3" fill="none"/></svg>
<div class="emo" style="left:566.10px;top:247.73px"></div>
<svg style="left:566.10px;top:247.73px" width="14" height="14" viewBox="0 0 14 14"><g fill="#d47a2e"><circle cx="6.9" cy="3" r=".95"/><circle cx="4.1" cy="3.9" r=".95"/><circle cx="9.7" cy="3.9" r=".95"/><circle cx="2.9" cy="6.5" r=".95"/><circle cx="4.1" cy="8.9" r=".95"/></g><path d="M6.6 6.6l4.9 1.9-2 .9 2.4 2.4-.9.9-2.4-2.4-.9 2z" fill="#b04a12"/></svg>
<div class="t" style="left:588px;top:242.83px;font-size:12.3px;line-height:26px;color:#3a3a3a">Check that user can<span style="letter-spacing:0.9px">'</span>t perform the transfer search, when all input fields in the</div>
<div class="t" style="left:1122px;width:100px;text-align:right;top:242.83px;font-size:12.3px;line-height:26px;color:#3a3a3a">form are empty</div>
<svg style="left:1234px;top:250.83px" width="10" height="10" viewBox="0 0 10 10"><circle cx="5" cy="5" r="4.7" fill="#52c38b"/><path d="M2.8 5.1l1.5 1.5 3-3" stroke="#fff" stroke-width="1.2" fill="none"/></svg>
<div class="sep" style="left:561px;top:267.63px;width:695px"></div>
<svg style="left:548.20px;top:276.76px" width="9" height="9" viewBox="0 0 9 9"><circle cx="4.5" cy="4.5" r="3.4" stroke="#6b7489" stroke-width="1.05" fill="none"/></svg>
<div class="emo" style="left:566.10px;top:273.76px"></div>
<svg style="left:566.10px;top:273.76px" width="14" height="14" viewBox="0 0 14 14"><g fill="#d47a2e"><circle cx="6.9" cy="3" r=".95"/><circle cx="4.1" cy="3.9" r=".95"/><circle cx="9.7" cy="3.9" r=".95"/><circle cx="2.9" cy="6.5" r=".95"/><circle cx="4.1" cy="8.9" r=".95"/></g><path d="M6.6 6.6l4.9 1.9-2 .9 2.4 2.4-.9.9-2.4-2.4-.9 2z" fill="#b04a12"/></svg>
<div class="t" style="left:588px;top:268.86px;font-size:12.3px;line-height:26px;color:#3a3a3a">Check that user can<span style="letter-spacing:0.9px">'</span>t perform the transfer search if the <span style="letter-spacing:0.9px">'</span>Location<span style="letter-spacing:0.9px">'</span> input field is empty</div>
<svg style="left:1234px;top:276.86px" width="10" height="10" viewBox="0 0 10 10"><circle cx="5" cy="5" r="4.7" fill="#52c38b"/><path d="M2.8 5.1l1.5 1.5 3-3" stroke="#fff" stroke-width="1.2" fill="none"/></svg>
<div class="sep" style="left:561px;top:293.66px;width:695px"></div>
<svg style="left:548.20px;top:302.79px" width="9" height="9" viewBox="0 0 9 9"><circle cx="4.5" cy="4.5" r="3.4" stroke="#6b7489" stroke-width="1.05" fill="none"/></svg>
<div class="emo" style="left:566.10px;top:299.79px"></div>
<svg style="left:566.10px;top:299.79px" width="14" height="14" viewBox="0 0 14 14"><g fill="#d47a2e"><circle cx="6.9" cy="3" r=".95"/><circle cx="4.1" cy="3.9" r=".95"/><circle cx="9.7" cy="3.9" r=".95"/><circle cx="2.9" cy="6.5" r=".95"/><circle cx="4.1" cy="8.9" r=".95"/></g><path d="M6.6 6.6l4.9 1.9-2 .9 2.4 2.4-.9.9-2.4-2.4-.9 2z" fill="#b04a12"/></svg>
<div class="t" style="left:588px;top:294.89px;font-size:12.3px;line-height:26px;color:#3a3a3a">Check that user can<span style="letter-spacing:0.9px">'</span>t continue transfer search if the Airport is not selected from the dropdown</div>
<svg style="left:1234px;top:302.89px" width="10" height="10" viewBox="0 0 10 10"><circle cx="5" cy="5" r="4.7" fill="#52c38b"/><path d="M2.8 5.1l1.5 1.5 3-3" stroke="#fff" stroke-width="1.2" fill="none"/></svg>
<div class="sep" style="left:561px;top:319.69px;width:695px"></div>
<svg style="left:548.20px;top:328.82px" width="9" height="9" viewBox="0 0 9 9"><circle cx="4.5" cy="4.5" r="3.4" stroke="#6b7489" stroke-width="1.05" fill="none"/></svg>
<div class="emo" style="left:566.10px;top:325.82px"></div>
<svg style="left:566.10px;top:325.82px" width="14" height="14" viewBox="0 0 14 14"><g fill="#d47a2e"><circle cx="6.9" cy="3" r=".95"/><circle cx="4.1" cy="3.9" r=".95"/><circle cx="9.7" cy="3.9" r=".95"/><circle cx="2.9" cy="6.5" r=".95"/><circle cx="4.1" cy="8.9" r=".95"/></g><path d="M6.6 6.6l4.9 1.9-2 .9 2.4 2.4-.9.9-2.4-2.4-.9 2z" fill="#b04a12"/></svg>
<div class="t" style="left:588px;top:320.92px;font-size:12.3px;line-height:26px;color:#3a3a3a">Check that user can<span style="letter-spacing:0.9px">'</span>t continue transfer search when Location is not selected from the dropdown</div>
<svg style="left:1234px;top:328.92px" width="10" height="10" viewBox="0 0 10 10"><circle cx="5" cy="5" r="4.7" fill="#52c38b"/><path d="M2.8 5.1l1.5 1.5 3-3" stroke="#fff" stroke-width="1.2" fill="none"/></svg>
<div class="sep" style="left:561px;top:345.72px;width:695px"></div>
<svg style="left:548.20px;top:354.85px" width="9" height="9" viewBox="0 0 9 9"><circle cx="4.5" cy="4.5" r="3.4" stroke="#6b7489" stroke-width="1.05" fill="none"/></svg>
<div class="emo" style="left:566.10px;top:351.85px"></div>
<svg style="left:566.10px;top:351.85px" width="14" height="14" viewBox="0 0 14 14"><g fill="#d47a2e"><circle cx="6.9" cy="3" r=".95"/><circle cx="4.1" cy="3.9" r=".95"/><circle cx="9.7" cy="3.9" r=".95"/><circle cx="2.9" cy="6.5" r=".95"/><circle cx="4.1" cy="8.9" r=".95"/></g><path d="M6.6 6.6l4.9 1.9-2 .9 2.4 2.4-.9.9-2.4-2.4-.9 2z" fill="#b04a12"/></svg>
<div class="t" style="left:588px;top:346.95px;font-size:12.3px;line-height:26px;color:#3a3a3a">Check that user can<span style="letter-spacing:0.9px">'</span>t perform a trasfer search if pick-up date is not selected</div>
<svg style="left:1234px;top:354.95px" width="10" height="10" viewBox="0 0 10 10"><circle cx="5" cy="5" r="4.7" fill="#52c38b"/><path d="M2.8 5.1l1.5 1.5 3-3" stroke="#fff" stroke-width="1.2" fill="none"/></svg>
<div class="sep" style="left:561px;top:371.75000000000006px;width:695px"></div>
<svg style="left:548.20px;top:380.88px" width="9" height="9" viewBox="0 0 9 9"><circle cx="4.5" cy="4.5" r="3.4" stroke="#6b7489" stroke-width="1.05" fill="none"/></svg>
<div class="emo" style="left:566.10px;top:377.88px"></div>
<svg style="left:566.10px;top:377.88px" width="14" height="14" viewBox="0 0 14 14"><g fill="#d47a2e"><circle cx="6.9" cy="3" r=".95"/><circle cx="4.1" cy="3.9" r=".95"/><circle cx="9.7" cy="3.9" r=".95"/><circle cx="2.9" cy="6.5" r=".95"/><circle cx="4.1" cy="8.9" r=".95"/></g><path d="M6.6 6.6l4.9 1.9-2 .9 2.4 2.4-.9.9-2.4-2.4-.9 2z" fill="#b04a12"/></svg>
<div class="t" style="left:588px;top:372.98px;font-size:12.3px;line-height:26px;color:#3a3a3a">Check that user can perform transfer search if airport and location are located in different areas</div>
<svg style="left:1234px;top:380.98px" width="10" height="10" viewBox="0 0 10 10"><circle cx="5" cy="5" r="4.7" fill="#52c38b"/><path d="M2.8 5.1l1.5 1.5 3-3" stroke="#fff" stroke-width="1.2" fill="none"/></svg>
<div class="sep" style="left:561px;top:397.78000000000003px;width:695px"></div>
<svg style="left:548.20px;top:406.41px" width="9" height="10" viewBox="0 0 9 10"><path d="M0 2.6L4.5 0 9 2.6V10L4.5 7.2 0 10z" fill="#e02434"/></svg>
<div class="emo" style="left:566.10px;top:403.91px"></div>
<svg style="left:566.10px;top:403.91px" width="14" height="14" viewBox="0 0 14 14"><g fill="#d47a2e"><circle cx="6.9" cy="3" r=".95"/><circle cx="4.1" cy="3.9" r=".95"/><circle cx="9.7" cy="3.9" r=".95"/><circle cx="2.9" cy="6.5" r=".95"/><circle cx="4.1" cy="8.9" r=".95"/></g><path d="M6.6 6.6l4.9 1.9-2 .9 2.4 2.4-.9.9-2.4-2.4-.9 2z" fill="#b04a12"/></svg>
<div class="t" style="left:588px;top:399.01px;font-size:12.3px;line-height:26px;color:#3a3a3a">Check that user can search the transfer from Pick-up Location to Destination Airport by entering valid data in all input</div>
<svg style="left:1234px;top:407.01px" width="10" height="10" viewBox="0 0 10 10"><circle cx="5" cy="5" r="4.7" fill="#52c38b"/><path d="M2.8 5.1l1.5 1.5 3-3" stroke="#fff" stroke-width="1.2" fill="none"/></svg>
<div class="sep" style="left:561px;top:423.81px;width:695px"></div>
<svg style="left:548.20px;top:432.94px" width="9" height="9" viewBox="0 0 9 9"><circle cx="4.5" cy="4.5" r="3.4" stroke="#6b7489" stroke-width="1.05" fill="none"/></svg>
<div class="emo" style="left:566.10px;top:429.94px"></div>
<svg style="left:566.10px;top:429.94px" width="14" height="14" viewBox="0 0 14 14"><g fill="#d47a2e"><circle cx="6.9" cy="3" r=".95"/><circle cx="4.1" cy="3.9" r=".95"/><circle cx="9.7" cy="3.9" r=".95"/><circle cx="2.9" cy="6.5" r=".95"/><circle cx="4.1" cy="8.9" r=".95"/></g><path d="M6.6 6.6l4.9 1.9-2 .9 2.4 2.4-.9.9-2.4-2.4-.9 2z" fill="#b04a12"/></svg>
<div class="t" style="left:588px;top:425.04px;font-size:12.3px;line-height:26px;color:#3a3a3a">Check that <span style="letter-spacing:0.9px">'</span>Airport<span style="letter-spacing:0.9px">'</span>, <span style="letter-spacing:0.9px">'</span>Location<span style="letter-spacing:0.9px">'</span> and <span style="letter-spacing:0.9px">'</span>Pick-up date<span style="letter-spacing:0.9px">'</span> fields are empty by default</div>
<svg style="left:1234px;top:433.04px" width="10" height="10" viewBox="0 0 10 10"><circle cx="5" cy="5" r="4.7" fill="#52c38b"/><path d="M2.8 5.1l1.5 1.5 3-3" stroke="#fff" stroke-width="1.2" fill="none"/></svg>
<div class="sep" style="left:561px;top:449.84000000000003px;width:695px"></div>
<svg style="left:548.20px;top:458.97px" width="9" height="9" viewBox="0 0 9 9"><circle cx="4.5" cy="4.5" r="3.4" stroke="#6b7489" stroke-width="1.05" fill="none"/></svg>
<div class="emo" style="left:566.10px;top:455.97px"></div>
<svg style="left:566.10px;top:455.97px" width="14" height="14" viewBox="0 0 14 14"><g fill="#d47a2e"><circle cx="6.9" cy="3" r=".95"/><circle cx="4.1" cy="3.9" r=".95"/><circle cx="9.7" cy="3.9" r=".95"/><circle cx="2.9" cy="6.5" r=".95"/><circle cx="4.1" cy="8.9" r=".95"/></g><path d="M6.6 6.6l4.9 1.9-2 .9 2.4 2.4-.9.9-2.4-2.4-.9 2z" fill="#b04a12"/></svg>
<div class="t" style="left:588px;top:451.07px;font-size:12.3px;line-height:26px;color:#3a3a3a">Check that search option from <span style="letter-spacing:0.9px">'</span>From airport<span style="letter-spacing:0.9px">'</span> is selected by default on <span style="letter-spacing:0.9px">'</span>Airport transfer<span style="letter-spacing:0.9px">'</span> search</div>
<svg style="left:1234px;top:459.07px" width="10" height="10" viewBox="0 0 10 10"><circle cx="5" cy="5" r="4.7" fill="#52c38b"/><path d="M2.8 5.1l1.5 1.5 3-3" stroke="#fff" stroke-width="1.2" fill="none"/></svg>
<div class="sep" style="left:561px;top:475.87000000000006px;width:695px"></div>
<svg style="left:548.70px;top:484.50px" width="8" height="9" viewBox="0 0 8 9"><path d="M1 4l3-3 3 3M1 8l3-3 3 3" stroke="#e02434" stroke-width="1.3" fill="none"/></svg>
<div class="emo" style="left:566.10px;top:482.00px"></div>
<svg style="left:566.10px;top:482.00px" width="14" height="14" viewBox="0 0 14 14"><g fill="#d47a2e"><circle cx="6.9" cy="3" r=".95"/><circle cx="4.1" cy="3.9" r=".95"/><circle cx="9.7" cy="3.9" r=".95"/><circle cx="2.9" cy="6.5" r=".95"/><circle cx="4.1" cy="8.9" r=".95"/></g><path d="M6.6 6.6l4.9 1.9-2 .9 2.4 2.4-.9.9-2.4-2.4-.9 2z" fill="#b04a12"/></svg>
<div class="t" style="left:588px;top:477.10px;font-size:12.3px;line-height:26px;color:#3a3a3a">Check that user can change the search from <span style="letter-spacing:0.9px">'</span>From airport<span style="letter-spacing:0.9px">'</span> to <span style="letter-spacing:0.9px">'</span>To airport<span style="letter-spacing:0.9px">'</span> and back</div>
<svg style="left:1234px;top:485.10px" width="10" height="10" viewBox="0 0 10 10"><circle cx="5" cy="5" r="4.7" fill="#52c38b"/><path d="M2.8 5.1l1.5 1.5 3-3" stroke="#fff" stroke-width="1.2" fill="none"/></svg>
<div class="sep" style="left:561px;top:501.90000000000003px;width:695px"></div>
<svg style="left:548.20px;top:511.03px" width="9" height="9" viewBox="0 0 9 9"><circle cx="4.5" cy="4.5" r="3.4" stroke="#6b7489" stroke-width="1.05" fill="none"/></svg>
<div class="emo" style="left:566.10px;top:508.03px"></div>
<svg style="left:566.10px;top:508.03px" width="14" height="14" viewBox="0 0 14 14"><g fill="#d47a2e"><circle cx="6.9" cy="3" r=".95"/><circle cx="4.1" cy="3.9" r=".95"/><circle cx="9.7" cy="3.9" r=".95"/><circle cx="2.9" cy="6.5" r=".95"/><circle cx="4.1" cy="8.9" r=".95"/></g><path d="M6.6 6.6l4.9 1.9-2 .9 2.4 2.4-.9.9-2.4-2.4-.9 2z" fill="#b04a12"/></svg>
<div class="abs" style="left:1025px;top:508.5px;width:45px;height:14px;border-radius:4px;background:#fdeab0"></div>
<div class="t" style="left:1030px;top:508.5px;font-size:9px;line-height:14px;color:#9a7426">&#128293;</div>
<div class="t" style="left:1041px;top:508.5px;font-size:9.6px;line-height:14px;color:#9a7426">Major</div>
<div class="abs" style="left:1076px;top:508.5px;width:61px;height:14px;border-radius:4px;background:#d5e7fb"></div>
<div class="t" style="left:1082px;top:508.5px;font-size:9.1px;line-height:14px;color:#56759a">Automatable</div>
<div class="t" style="left:588px;top:503.13px;font-size:12.3px;line-height:26px;color:#3a3a3a">Check that user can<span style="letter-spacing:0.9px">'</span>t perform the transfer search if <span style="letter-spacing:0.9px">'</span>Airport<span style="letter-spacing:0.9px">'</span> input field is empty</div>
<svg style="left:1234px;top:511.13px" width="10" height="10" viewBox="0 0 10 10"><circle cx="5" cy="5" r="4.7" fill="#52c38b"/><path d="M2.8 5.1l1.5 1.5 3-3" stroke="#fff" stroke-width="1.2" fill="none"/></svg>
<div class="sep" style="left:561px;top:527.9300000000001px;width:695px"></div>
<div class="abs" style="left:519px;top:650px;width:614px;height:27px;border-radius:6px;border:1px solid #e6e6e6;background:#fff"></div>
<div class="t" style="left:531px;top:656px;font-size:10.8px;line-height:14px;color:#777">Add new test</div>
<div class="abs" style="left:1142px;top:650px;width:57px;height:26px;border-radius:6px;background:#6466f1"></div>
<div class="t" style="left:1154px;top:656px;font-size:10.8px;line-height:14px;color:#fff">Create</div>
<div class="t" style="left:1204px;top:656px;font-size:10.4px;line-height:14px;color:#222">Bulk</div>
<div class="abs" style="left:1230px;top:657px;width:28px;height:11px;border-radius:6px;background:#e4e5e9"></div>
<div class="abs" style="left:1230px;top:655px;width:15px;height:15px;border-radius:50%;background:#fff;box-shadow:0 0 2px rgba(0,0,0,.3)"></div>
<div class="abs" style="left:498px;top:346.5px;width:2.5px;height:25px;border-radius:2px;background:#a0a0a0"></div>
<div class="abs" style="left:1008px;top:38px;width:185px;height:335px;border-radius:7px;background:#fff;box-shadow:0 2px 10px rgba(0,0,0,.12), 0 0 0 1px rgba(0,0,0,.03)"></div>
<div class="t" style="left:1042px;top:49px;font-size:10.75px;line-height:14px;color:#4b5563">Copy</div>
<div class="t" style="left:1042px;top:76px;font-size:10.75px;line-height:14px;color:#4b5563">Share to other projects</div>
<div class="t" style="left:1042px;top:103px;font-size:10.75px;line-height:14px;color:#4b5563">Move</div>
<div class="t" style="left:1042px;top:130px;font-size:10.75px;line-height:14px;color:#4b5563">Labels</div>
<div class="t" style="left:1042px;top:157px;font-size:10.75px;line-height:14px;color:#4b5563">Link to Issue</div>
<div class="t" style="left:1042px;top:184px;font-size:10.75px;line-height:14px;color:#4b5563">Requirements</div>
<div class="t" style="left:1042px;top:211px;font-size:10.75px;line-height:14px;color:#4b5563">Export as PDF</div>
<div class="t" style="left:1042px;top:238px;font-size:10.75px;line-height:14px;color:#4b5563">Run Tests</div>
<div class="t" style="left:1042px;top:265px;font-size:10.75px;line-height:14px;color:#4b5563">Add to Run</div>
<div class="t" style="left:1042px;top:292px;font-size:10.75px;line-height:14px;color:#4b5563">Bulk edit</div>
<div class="t" style="left:1042px;top:319px;font-size:10.75px;line-height:14px;color:#4b5563">Download suite with all tests</div>
<div class="t" style="left:1042px;top:346px;font-size:10.75px;line-height:14px;color:#dc2626">Delete suite with all tests</div>
<div class="sep" style="left:1008px;top:123px;width:185px;background:#f0f0f2"></div>
<div class="sep" style="left:1008px;top:232px;width:185px;background:#f0f0f2"></div>
<div class="sep" style="left:1008px;top:313px;width:185px;background:#f0f0f2"></div>
<div class="sep" style="left:1008px;top:340px;width:185px;background:#f0f0f2"></div>
<svg style="left:1019px;top:49.5px" width="13" height="13" viewBox="0 0 13 13"><rect x="3.6" y="3.6" width="7.8" height="9" rx="1" stroke="#4b5563" stroke-width="1.35" fill="none"/><path d="M1.2 10V1.8a.6.6 0 01.6-.6h7.4" stroke="#4b5563" stroke-width="1.35" fill="none"/></svg>
<svg style="left:1019px;top:76.5px" width="13" height="13" viewBox="0 0 13 13"><path d="M5.5 1.5H1.5v10h10V8" stroke="#4b5563" stroke-width="1.35" fill="none"/><path d="M4.5 8.5c.5-3 2.5-4.5 6-4.5M8.8 1.8L11 4 8.8 6.2" stroke="#4b5563" stroke-width="1.35" fill="none"/></svg>
<svg style="left:1019px;top:103.5px" width="13" height="13" viewBox="0 0 13 13"><path d="M1.5 6.5h10M7.5 2.5l4 4-4 4" stroke="#4b5563" stroke-width="1.35" fill="none"/></svg>
<svg style="left:1019px;top:130.5px" width="13" height="13" viewBox="0 0 13 13"><path d="M1.3 2.2v4.2l5.6 5.6a1 1 0 001.4 0l3.2-3.2a1 1 0 000-1.4L5.9 1.8H1.7z" stroke="#4b5563" stroke-width="1.35" fill="none"/><path d="M5.5 6l2.5 2.5M6.6 4.8l2.5 2.5" stroke="#4b5563" stroke-width="1" fill="none"/></svg>
<svg style="left:1019px;top:157.5px" width="13" height="13" viewBox="0 0 13 13"><path d="M6.5 1.5v10M1.5 6.5h10" stroke="#4b5563" stroke-width="1.35" fill="none"/></svg>
<svg style="left:1019px;top:184.5px" width="13" height="13" viewBox="0 0 13 13"><rect x="1.2" y="3.6" width="10.6" height="8" rx="1" stroke="#4b5563" stroke-width="1.35" fill="none"/><path d="M4.3 3.6V1.6h4.4v2" stroke="#4b5563" stroke-width="1.35" fill="none"/></svg>
<svg style="left:1019px;top:211.5px" width="13" height="13" viewBox="0 0 13 13"><rect x="1.6" y="2.3" width="9.8" height="8.6" rx="1.2" fill="#3b4454"/><text x="6.5" y="7.9" font-size="3.6" font-weight="700" text-anchor="middle" fill="#fff" font-family="Liberation Sans">PDF</text></svg>
<svg style="left:1019px;top:238.5px" width="13" height="13" viewBox="0 0 13 13"><path d="M5.2 3.8l2.7 2.7-2.7 2.7" stroke="#4b5563" stroke-width="1.45" fill="none"/></svg>
<svg style="left:1019px;top:265.5px" width="13" height="13" viewBox="0 0 13 13"><path d="M1.3 3.6h7.2M1.3 6.4h7.2M1.3 9.2h4" stroke="#4b5563" stroke-width="1.4" fill="none"/><path d="M10 7.2v5M7.5 9.7h5" stroke="#4b5563" stroke-width="1.4" fill="none"/></svg>
<svg style="left:1019px;top:292.5px" width="13" height="13" viewBox="0 0 13 13"><path d="M1.3 3.6h7.2M1.3 6.4h5.8M1.3 9.2h3.8" stroke="#4b5563" stroke-width="1.4" fill="none"/><path d="M7.2 11.6l4.6-4.6" stroke="#4b5563" stroke-width="1.9" fill="none"/></svg>
<svg style="left:1019px;top:319.5px" width="13" height="13" viewBox="0 0 13 13"><path d="M6.5 1.2v7.2M3.7 5.6l2.8 2.8 2.8-2.8M1.2 8.5v3.2h10.6V8.5" stroke="#4b5563" stroke-width="1.35" fill="none"/></svg>
<svg style="left:1019px;top:346.5px" width="13" height="13" viewBox="0 0 13 13"><path d="M2 3.3h9M5 3.2V1.8h3v1.4M3.3 4.6v6.7a.8.8 0 00.8.8h4.8a.8.8 0 00.8-.8V4.6" stroke="#e0303f" stroke-width="1.35" fill="none"/></svg>
<div class="abs" style="left:1008px;top:204px;width:140px;height:26px;border:2px solid #ef2a3d"></div>
<div class="badge-red" style="left:1141.7px;top:220.1px">4</div>
<div class="badge-red" style="left:1186.6px;top:24.2px">3</div>
<div class="abs" style="left:67px;top:704px;width:25px;height:20px;border-radius:4px;background:#d9dce3"></div>
<svg style="left:74px;top:708px" width="12" height="12" viewBox="0 0 12 12"><path d="M4.3 4.3V2.6A1.7 1.7 0 1 0 2.6 4.3H9.4A1.7 1.7 0 1 0 7.7 2.6V9.4A1.7 1.7 0 1 0 9.4 7.7H2.6A1.7 1.7 0 1 0 4.3 9.4z" stroke="#4b5160" stroke-width="1.3" fill="none"/></svg>
</div></body></html>
